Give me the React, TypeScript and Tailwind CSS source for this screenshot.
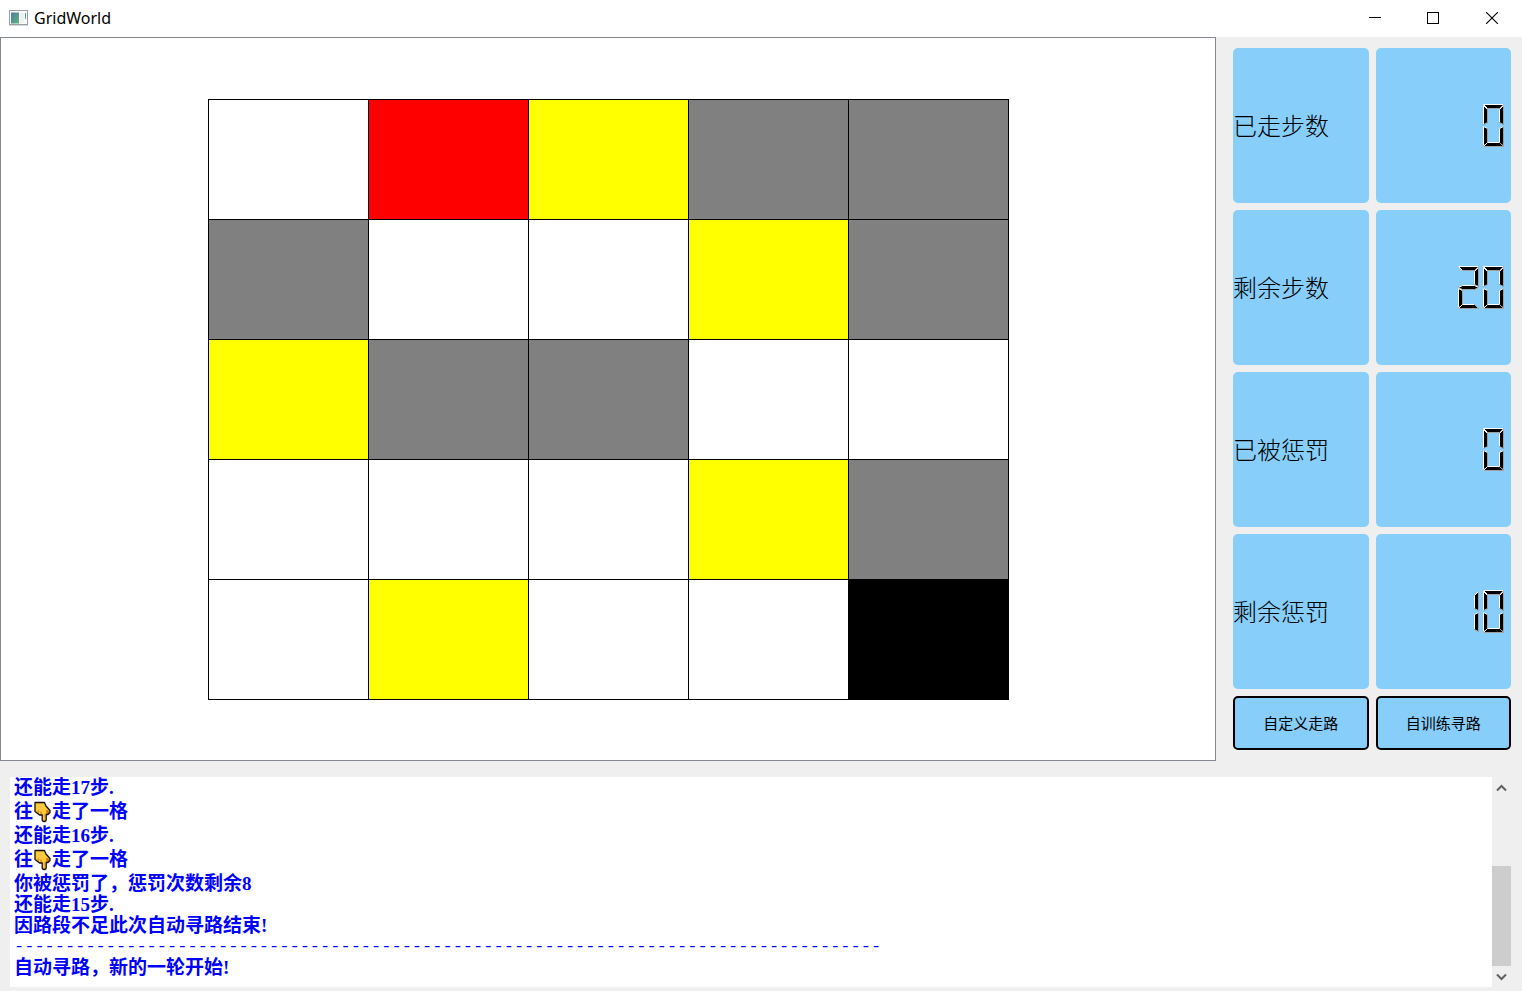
import { Fragment } from "react";

type Cell = "empty" | "red" | "yellow" | "gray" | "black";

const cellColors: Record<Cell, string> = {
  empty: "bg-white",
  red: "bg-[#ff0000]",
  yellow: "bg-[#ffff00]",
  gray: "bg-[#808080]",
  black: "bg-black",
};

const world: Cell[][] = [
  ["empty", "red", "yellow", "gray", "gray"],
  ["gray", "empty", "empty", "yellow", "gray"],
  ["yellow", "gray", "gray", "empty", "empty"],
  ["empty", "empty", "empty", "yellow", "gray"],
  ["empty", "yellow", "empty", "empty", "black"],
];

const stats = [
  { label: "已走步数", value: 0 },
  { label: "剩余步数", value: 20 },
  { label: "已被惩罚", value: 0 },
  { label: "剩余惩罚", value: 10 },
];

const DOWN = "👇";

const messages = [
  "还能走17步.",
  `往${DOWN}走了一格`,
  "还能走16步.",
  `往${DOWN}走了一格`,
  "你被惩罚了，惩罚次数剩余8",
  "还能走15步.",
  "因路段不足此次自动寻路结束!",
  "-".repeat(85),
  "自动寻路，新的一轮开始!",
];

// Bevelled segments of a seven-segment indicator: body, lit edges, shaded edges.
const segments = [
  { body: "0,0 20,0 16,4 4,4", light: "M4,4L0,0L20,0", dark: "M20,0L16,4L4,4" },
  { body: "0,1 4,5 4,18 0,20", light: "M0,20L0,1L4,5", dark: "M4,5L4,18L0,20" },
  { body: "20,1 20,20 16,18 16,5", light: "M16,18L16,5L20,1", dark: "M20,1L20,20L16,18" },
  { body: "0,21 4,19 16,19 20,21 16,23 4,23", light: "M0,21L4,19L16,19L20,21", dark: "M20,21L16,23L4,23L0,21" },
  { body: "0,22 4,24 4,39 0,41", light: "M0,41L0,22L4,24", dark: "M4,24L4,39L0,41" },
  { body: "20,22 20,41 16,39 16,24", light: "M16,39L16,24L20,22", dark: "M20,22L20,41L16,39" },
  { body: "0,42 4,38 16,38 20,42", light: "M0,42L4,38L16,38", dark: "M16,38L20,42L0,42" },
];

const litSegments: Record<string, number[]> = {
  "0": [0, 1, 2, 4, 5, 6],
  "1": [2, 5],
  "2": [0, 2, 3, 4, 6],
  "3": [0, 2, 3, 5, 6],
  "4": [1, 2, 3, 5],
  "5": [0, 1, 3, 5, 6],
  "6": [0, 1, 3, 4, 5, 6],
  "7": [0, 2, 5],
  "8": [0, 1, 2, 3, 4, 5, 6],
  "9": [0, 1, 2, 3, 5, 6],
};

function Lcd({ value }: { value: number }) {
  return (
    <div role="img" aria-label={String(value)} className="flex gap-1">
      {String(value)
        .split("")
        .map((digit, i) => (
          <svg key={i} width="21" height="43" viewBox="-0.5 -0.5 21 43" aria-hidden="true">
            {litSegments[digit].map((n) => (
              <g key={n}>
                <polygon points={segments[n].body} fill="#000" />
                <path d={segments[n].light} fill="none" stroke="#fff" />
                <path d={segments[n].dark} fill="none" stroke="#a0a0a0" />
              </g>
            ))}
          </svg>
        ))}
    </div>
  );
}

function HandDown() {
  return (
    <svg width="19" height="22" viewBox="0 0 19 22" role="img" aria-label={DOWN} className="inline-block align-middle">
      <path
        d="M2 1.5H11.5L13 5L17 9.5V11.5L15 13.5H13.2V18.5Q13.2 20.5 11.2 20.5Q9.2 20.5 9.2 18.5V14H6.5L2 10.5Z"
        fill="#ffc83d"
      />
      <path d="M5.2 9.5V13M8 10.5V14" stroke="#d67d00" />
      <path d="M13.2 8.5L17 10V11.5L15 13.5H13.2Z" fill="#d67d00" />
      <path d="M11.8 13V19.5" stroke="#f0a51e" />
      <path
        d="M2 1.5H11.5L13 5L17 9.5V11.5L15 13.5H13.2V18.5Q13.2 20.5 11.2 20.5Q9.2 20.5 9.2 18.5V14H6.5L2 10.5Z"
        fill="none"
        stroke="#111"
        strokeWidth="1.3"
        strokeLinejoin="round"
      />
    </svg>
  );
}

function Message({ text }: { text: string }) {
  if (text.startsWith("--")) {
    return (
      <p className="h-[21px] font-['Liberation_Mono',monospace] text-[17px] leading-[21px] font-normal whitespace-nowrap">
        {text}
      </p>
    );
  }
  const parts = text.split(DOWN);
  if (parts.length === 1) {
    return <p className="h-[21px] text-[19px] leading-[21px]">{text}</p>;
  }
  return (
    <p className="flex h-[27px] items-center text-[19px] leading-[27px]">
      {parts.map((part, i) => (
        <Fragment key={i}>
          {i > 0 && <HandDown />}
          <span>{part}</span>
        </Fragment>
      ))}
    </p>
  );
}

function TitleBar() {
  return (
    <header className="flex h-[37px] items-center bg-white pb-px pl-[9px]">
      <svg width="19" height="16" viewBox="0 0 19 16" aria-hidden="true">
        <defs>
          <linearGradient id="pane" x1="0" y1="0" x2="1" y2="1">
            <stop offset="0" stopColor="#4a7fa5" />
            <stop offset="1" stopColor="#5fb27d" />
          </linearGradient>
        </defs>
        <rect x="0.5" y="0.5" width="18" height="14" fill="#fafafa" stroke="#9a9fa6" />
        <rect x="2" y="2.5" width="8" height="11" fill="url(#pane)" />
        <rect x="11" y="3" width="4" height="10" fill="#eef0f2" />
        <rect x="16" y="3" width="1" height="6" fill="#5aa58c" />
        <rect x="0" y="15" width="19" height="1" fill="#d5d8db" />
      </svg>
      <h1 className="ml-[6px] font-['Noto_Sans','Noto_Sans_CJK_SC',sans-serif] text-[16px] leading-5">GridWorld</h1>
      <div className="ml-auto flex h-full">
        <button type="button" aria-label="最小化" className="flex w-[58px] items-center justify-center">
          <svg width="12" height="12" viewBox="0 0 12 12" shapeRendering="crispEdges">
            <path d="M0 5.5H12" stroke="#000" />
          </svg>
        </button>
        <button type="button" aria-label="最大化" className="flex w-[58px] items-center justify-center">
          <svg width="12" height="12" viewBox="0 0 12 12" shapeRendering="crispEdges">
            <rect x="0.5" y="0.5" width="11" height="11" fill="none" stroke="#000" />
          </svg>
        </button>
        <button type="button" aria-label="关闭" className="flex w-[60px] items-center justify-center">
          <svg width="12" height="12" viewBox="0 0 12 12">
            <path d="M0 0L12 12M12 0L0 12" stroke="#000" strokeWidth="1.1" />
          </svg>
        </button>
      </div>
    </header>
  );
}

export default function App() {
  return (
    <div className="flex min-h-screen flex-col bg-[#efefef] font-['Noto_Sans_CJK_SC',sans-serif] text-black">
      <TitleBar />
      <main className="flex flex-1 flex-col">
        <div className="flex flex-1">
          <section
            aria-label="GridWorld"
            className="flex flex-1 items-center justify-center border border-[#828790] bg-white"
          >
            <div className="grid grid-cols-5 gap-px bg-black p-px">
              {world.flat().map((cell, i) => (
                <div key={i} className={`h-[119px] w-[159px] ${cellColors[cell]}`} />
              ))}
            </div>
          </section>
          <aside className="flex w-[306px] flex-col gap-[7px] py-[11px] pr-[11px] pl-[17px]">
            {stats.map((s) => (
              <div key={s.label} className="grid flex-1 grid-cols-2 gap-[7px]">
                <div className="flex items-center rounded-[5px] bg-[#87cefa] pb-[2px] text-[24px] leading-8 font-light">
                  {s.label}
                </div>
                <div className="flex items-center justify-end rounded-[5px] bg-[#87cefa] pr-[7px]">
                  <Lcd value={s.value} />
                </div>
              </div>
            ))}
            <div className="grid h-[54px] grid-cols-2 gap-[7px]">
              <button type="button" className="rounded-[5px] border-2 border-black bg-[#87cefa] text-[15px]">
                自定义走路
              </button>
              <button type="button" className="rounded-[5px] border-2 border-black bg-[#87cefa] text-[15px]">
                自训练寻路
              </button>
            </div>
          </aside>
        </div>
        <section className="mt-4 mr-[11px] mb-1 ml-[10px] flex min-h-[210px]">
          <div
            role="log"
            className="flex flex-1 flex-col bg-white pl-1 font-['Liberation_Serif','Noto_Sans_CJK_SC',serif] font-bold text-[#0000ff]"
          >
            {messages.map((m, i) => (
              <Message key={i} text={m} />
            ))}
          </div>
          <div className="flex w-[19px] flex-col">
            <button type="button" aria-label="向上滚动" className="flex h-[21px] items-center justify-center">
              <svg width="11" height="8" viewBox="0 0 11 8">
                <path d="M1 6.5L5.5 2L10 6.5" fill="none" stroke="#606060" strokeWidth="2" />
              </svg>
            </button>
            <div className="flex flex-1 flex-col justify-end">
              <div className="h-[100px] bg-[#cdcdcd]" />
            </div>
            <button type="button" aria-label="向下滚动" className="flex h-[21px] items-center justify-center">
              <svg width="11" height="8" viewBox="0 0 11 8">
                <path d="M1 1.5L5.5 6L10 1.5" fill="none" stroke="#606060" strokeWidth="2" />
              </svg>
            </button>
          </div>
        </section>
      </main>
    </div>
  );
}
